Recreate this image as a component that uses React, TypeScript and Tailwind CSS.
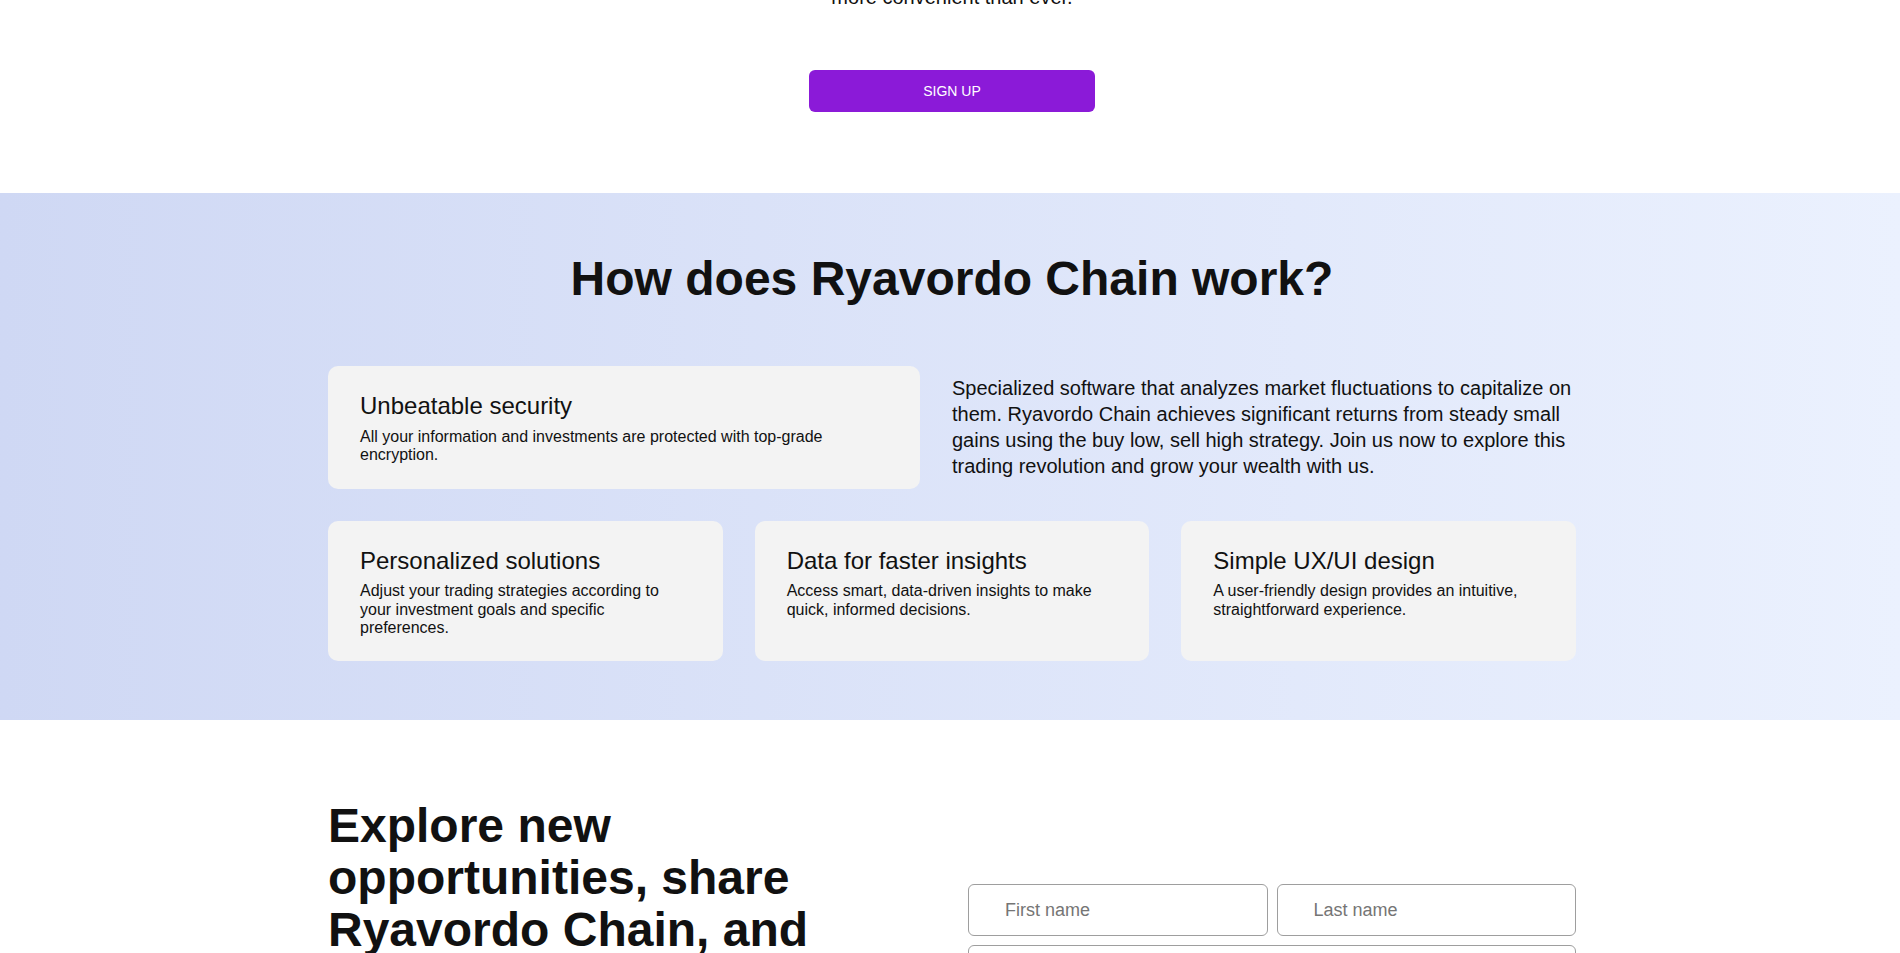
import React from 'react';

const features = [
    {
        title: 'Personalized solutions',
        text: 'Adjust your trading strategies according to your investment goals and specific preferences.',
    },
    {
        title: 'Data for faster insights',
        text: 'Access smart, data-driven insights to make quick, informed decisions.',
    },
    {
        title: 'Simple UX/UI design',
        text: 'A user-friendly design provides an intuitive, straightforward experience.',
    },
];

function FeatureCard({ title, text }: { title: string; text: string }) {
    return (
        <div className="rounded-[10px] bg-[#f3f3f3] px-8 pt-[26px] pb-6">
            <h3 className="text-[24px] leading-[1.15] font-normal text-[#111]">{title}</h3>
            <p className="mt-2 pr-6 text-[16px] leading-[1.15] text-[#111]">{text}</p>
        </div>
    );
}

function Input({ placeholder, type = 'text' }: { placeholder: string; type?: string }) {
    return (
        <input
            type={type}
            placeholder={placeholder}
            className="h-[52px] w-full rounded-[6px] border border-[#9e9e9e] bg-white px-9 text-[18px] text-[#111] placeholder:text-[#757575] outline-none"
        />
    );
}

export default function App() {
    return (
        <div className="min-h-screen bg-white font-['Liberation_Sans',Arial,sans-serif] text-[#111]">
            {/* hero tail */}
            <section className="-mt-[16px] pb-[81px] pl-[4px] flex flex-col items-center">
                <p className="text-center text-[20px] leading-[26px]">more convenient than ever.</p>
                <button className="mt-[60px] h-[42px] w-[286px] rounded-[6px] bg-[#8b1ad8] text-[14px] text-white uppercase">
                    Sign up
                </button>
            </section>

            {/* how it works */}
            <section className="bg-gradient-to-r from-[#cfd8f4] to-[#ebf1fe] pt-[58px] pb-[59px] pl-[4px]">
                <div className="mx-auto w-[1248px]">
                    <h2 className="text-center text-[48px] leading-[1.15] font-bold">How does Ryavordo Chain work?</h2>

                    <div className="mt-[60px] grid grid-cols-[592px_1fr] items-center gap-8">
                        <div className="rounded-[10px] bg-[#f3f3f3] px-8 pt-[26px] pb-6">
                            <h3 className="text-[24px] leading-[1.15] font-normal">Unbeatable security</h3>
                            <p className="mt-2 text-[16px] leading-[1.15]">
                                All your information and investments are protected with top-grade encryption.
                            </p>
                        </div>
                        <p className="text-[20px] leading-[26px]">
                            Specialized software that analyzes market fluctuations to capitalize on them. Ryavordo Chain
                            achieves significant returns from steady small gains using the buy low, sell high strategy.
                            Join us now to explore this trading revolution and grow your wealth with us.
                        </p>
                    </div>

                    <div className="mt-8 grid grid-cols-3 gap-8">
                        {features.map((f) => (
                            <FeatureCard key={f.title} title={f.title} text={f.text} />
                        ))}
                    </div>
                </div>
            </section>

            {/* signup */}
            <section className="pt-[80px] pb-20 pl-[4px]">
                <div className="mx-auto grid w-[1248px] grid-cols-2 items-start gap-8">
                    <h2 className="max-w-[540px] text-[48px] leading-[1.075] font-bold">
                        Explore new opportunities, share Ryavordo Chain, and grow together
                    </h2>
                    <form className="mt-[84px] flex flex-col gap-[9px]" onSubmit={(e) => e.preventDefault()}>
                        <div className="grid grid-cols-2 gap-[9px]">
                            <Input placeholder="First name" />
                            <Input placeholder="Last name" />
                        </div>
                        <Input placeholder="Email" type="email" />
                        <Input placeholder="Phone number" type="tel" />
                        <button className="mt-2 h-[52px] rounded-[6px] bg-[#8b1ad8] text-[14px] text-white uppercase">
                            Register now
                        </button>
                    </form>
                </div>
            </section>
        </div>
    );
}
